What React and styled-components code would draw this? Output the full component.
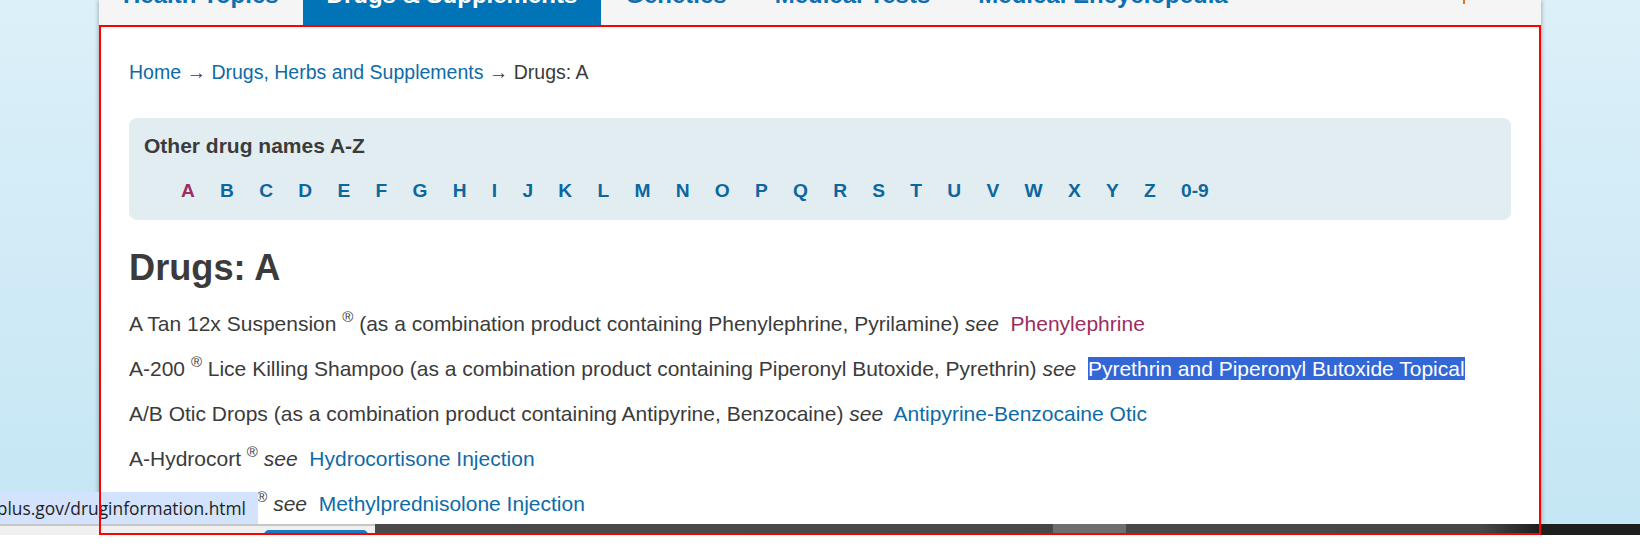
import React from 'react';
import styled, { createGlobalStyle } from 'styled-components';

const GlobalStyle = createGlobalStyle`
  html, body {
    margin: 0;
    padding: 0;
    background: #ffffff;
  }
  body {
    font-family: "Liberation Sans", Arial, sans-serif;
  }
`;

// Whole captured screen
const Screen = styled.div`
  position: relative;
  width: 1640px;
  height: 560px;
  overflow: hidden;
  background: #ffffff;
`;

// Browser viewport with the site background
const Viewport = styled.div`
  position: relative;
  height: 524px;
  overflow: hidden;
  background: linear-gradient(180deg, #dcf0f9 0%, #c5e6f4 100%);
`;

const Page = styled.div`
  width: 1442px;
  height: 100%;
  margin-left: 99px;
  background: #ffffff;
  box-shadow: 0 0 5px rgba(0, 0, 0, 0.35);
`;

// Top navigation (mostly scrolled out of view)
const Nav = styled.nav`
  display: flex;
  height: 25px;
  background: #f5f5f5;
`;

const NavItem = styled.a`
  display: flex;
  align-items: flex-end;
  height: 25px;
  padding: 0 24px;
  overflow: hidden;
  background: ${p => (p.$active ? '#0074b7' : 'transparent')};
  color: ${p => (p.$active ? '#ffffff' : '#0d70b3')};
  font-size: 24px;
  font-weight: 700;
  text-decoration: none;
`;

const NavLabel = styled.span`
  line-height: 28px;
  margin-bottom: 16px;
  white-space: nowrap;
`;

const NavMark = styled.span`
  align-self: flex-start;
  width: 2px;
  height: 4px;
  margin: 0 76px 0 auto;
  background: #e8731c;
`;

const Main = styled.main`
  padding: 33px 30px 0;
  color: #3b3b3b;
  font-size: 21px;
  line-height: 28.8px;
`;

const Breadcrumb = styled.div`
  font-size: 19.5px;
  white-space: nowrap;
`;

const Link = styled.a`
  color: ${p => (p.$visited ? '#9a2e60' : '#0e6ba8')};
  text-decoration: none;
`;

// A-Z box
const AzBox = styled.section`
  margin-top: 31px;
  padding: 14px 15px;
  background: #e2edf2;
  border-radius: 8px;
`;

const AzTitle = styled.h2`
  margin: 0;
  font-size: 21px;
  line-height: 28px;
  font-weight: 700;
  color: #3b3b3b;
`;

const LetterList = styled.ul`
  display: flex;
  gap: 25.25px;
  margin: 17px 0 0;
  padding: 0 0 0 37px;
  list-style: none;
  font-size: 19.2px;
`;

const Letter = styled.a`
  font-weight: 700;
  color: ${p => (p.$current ? '#9a2e60' : '#0c679e')};
  text-decoration: none;
`;

const Heading = styled.h1`
  margin: 27px 0 0;
  font-size: 36.2px;
  line-height: 42px;
  font-weight: 700;
  color: #3b3b3b;
`;

const EntryList = styled.ul`
  margin: 21.5px 0 0;
  padding: 0;
  list-style: none;
`;

const Entry = styled.li`
  margin-bottom: 16.2px;
  white-space: nowrap;
`;

const Reg = styled.sup`
  font-size: 15px;
  line-height: 0;
  vertical-align: 9px;
`;

const See = styled.em`
  font-style: italic;
`;

const Selected = styled.span`
  background: #3367d6;
  color: #ffffff;
`;

// Browser status tooltip
const StatusTip = styled.div`
  position: absolute;
  left: 0;
  bottom: 0;
  display: flex;
  justify-content: flex-end;
  align-items: center;
  width: 258px;
  height: 32px;
  padding-right: 12px;
  box-sizing: border-box;
  overflow: hidden;
  background: #d3e3fd;
  color: #1f1f1f;
  font-family: "Open Sans", "Noto Sans", sans-serif;
  font-size: 17.4px;
  white-space: nowrap;
`;

// Bottom taskbar strip
const Strip = styled.div`
  display: flex;
  height: 11px;
`;

const StripLight = styled.div`
  display: flex;
  align-items: flex-end;
  width: 375px;
  padding-left: 264px;
  box-sizing: border-box;
  background: #f0f0f0;
  border-top: 2px solid #c6c6c6;
`;

const StripButton = styled.div`
  width: 104px;
  height: 5px;
  background: #1b78c4;
  border-radius: 10px 10px 0 0;
`;

const StripDark = styled.div`
  flex: 1;
  padding-left: 678px;
  background: linear-gradient(90deg, #4a4a4a 0%, #474747 87.5%, #1e1e1e 92%, #1e1e1e 100%);
`;

const StripThumb = styled.div`
  width: 73px;
  height: 100%;
  background: #6e6e6e;
`;

// Red annotation frame over the content
const Frame = styled.div`
  position: absolute;
  left: 99px;
  top: 25px;
  width: 1442px;
  height: 510px;
  box-sizing: border-box;
  border: 2px solid #ff0000;
  pointer-events: none;
`;

const navItems = ['Health Topics', 'Drugs & Supplements', 'Genetics', 'Medical Tests', 'Medical Encyclopedia'];
const letters = 'ABCDEFGHIJKLMNOPQRSTUVWXYZ'.split('').concat('0-9');

const App = () => {
  return (
    <>
      <GlobalStyle />
      <Screen>
        <Viewport>
          <Page>
            <Nav>
              {navItems.map(item => (
                <NavItem key={item} href="#" $active={item === 'Drugs & Supplements'}>
                  <NavLabel>{item}</NavLabel>
                </NavItem>
              ))}
              <NavMark />
            </Nav>

            <Main>
              <Breadcrumb>
                <Link href="#">Home</Link> → <Link href="#">Drugs, Herbs and Supplements</Link> → Drugs: A
              </Breadcrumb>

              <AzBox>
                <AzTitle>Other drug names A-Z</AzTitle>
                <LetterList>
                  {letters.map(l => (
                    <li key={l}>
                      <Letter href="#" $current={l === 'A'}>{l}</Letter>
                    </li>
                  ))}
                </LetterList>
              </AzBox>

              <Heading>Drugs: A</Heading>

              <EntryList>
                <Entry>
                  A Tan 12x Suspension <Reg>®</Reg> (as a combination product containing Phenylephrine, Pyrilamine) <See>see</See>&nbsp; <Link href="#" $visited>Phenylephrine</Link>
                </Entry>
                <Entry>
                  A-200 <Reg>®</Reg> Lice Killing Shampoo (as a combination product containing Piperonyl Butoxide, Pyrethrin) <See>see</See>&nbsp; <Selected>Pyrethrin and Piperonyl Butoxide Topical</Selected>
                </Entry>
                <Entry>
                  A/B Otic Drops (as a combination product containing Antipyrine, Benzocaine) <See>see</See>&nbsp; <Link href="#">Antipyrine-Benzocaine Otic</Link>
                </Entry>
                <Entry>
                  A-Hydrocort <Reg>®</Reg> <See>see</See>&nbsp; <Link href="#">Hydrocortisone Injection</Link>
                </Entry>
                <Entry>
                  A-Methapred <Reg>®</Reg> <See>see</See>&nbsp; <Link href="#">Methylprednisolone Injection</Link>
                </Entry>
              </EntryList>
            </Main>
          </Page>

          <StatusTip>https://medlineplus.gov/druginformation.html</StatusTip>
        </Viewport>

        <Strip>
          <StripLight>
            <StripButton />
          </StripLight>
          <StripDark>
            <StripThumb />
          </StripDark>
        </Strip>

        <Frame />
      </Screen>
    </>
  );
};

export default App;
